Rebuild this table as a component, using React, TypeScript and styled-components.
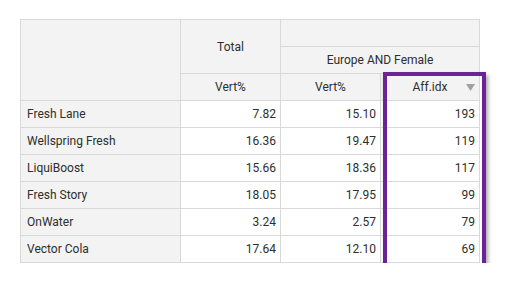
import React from "react";
import styled, { createGlobalStyle } from "styled-components";

const GlobalStyle = createGlobalStyle`
  html, body {
    margin: 0;
    padding: 0;
    background: #ffffff;
    font-family: Roboto, "Liberation Sans", sans-serif;
  }
`;

const Page = styled.div`
  padding: 19px 0 0 20px;
`;

const Frame = styled.div`
  position: relative;
  width: 459px;
`;

const Table = styled.table`
  border-collapse: collapse;
  table-layout: fixed;
  width: 459px;
  font-size: 12px;
  color: #2e2e2e;
`;

const Col = styled.col<{ $w: number }>`
  width: ${(p) => p.$w}px;
`;

const HeadCell = styled.th`
  height: 26px;
  padding: 0 4px;
  background: #f3f3f3;
  border: 1px solid #d9d9d9;
  font-weight: 400;
  text-align: center;
  vertical-align: middle;
  position: relative;
`;

const RowHead = styled.td`
  height: 26px;
  padding: 0 6px;
  background: #f3f3f3;
  border: 1px solid #d9d9d9;
  text-align: left;
  white-space: nowrap;
`;

const NumCell = styled.td`
  height: 26px;
  padding: 0 4px;
  background: #ffffff;
  border: 1px solid #d9d9d9;
  text-align: right;
`;

const SortArrow = styled.svg`
  position: absolute;
  right: 4px;
  top: 10px;
`;

const Highlight = styled.div`
  position: absolute;
  left: 363px;
  top: 53px;
  width: 103px;
  height: 195px;
  box-sizing: border-box;
  border: 4px solid #6a2496;
  box-shadow: 2px 3px 4px rgba(0, 0, 0, 0.35);
  pointer-events: none;
`;

const rows: [string, string, string, string][] = [
  ["Fresh Lane", "7.82", "15.10", "193"],
  ["Wellspring Fresh", "16.36", "19.47", "119"],
  ["LiquiBoost", "15.66", "18.36", "117"],
  ["Fresh Story", "18.05", "17.95", "99"],
  ["OnWater", "3.24", "2.57", "79"],
  ["Vector Cola", "17.64", "12.10", "69"],
];

const App = () => (
  <Page>
    <GlobalStyle />
    <Frame>
      <Table>
        <colgroup>
          <Col $w={160} />
          <Col $w={100} />
          <Col $w={100} />
          <Col $w={99} />
        </colgroup>
        <thead>
          <tr>
            <HeadCell rowSpan={3} />
            <HeadCell rowSpan={2}>Total</HeadCell>
            <HeadCell colSpan={2} />
          </tr>
          <tr>
            <HeadCell colSpan={2}>Europe AND Female</HeadCell>
          </tr>
          <tr>
            <HeadCell>Vert%</HeadCell>
            <HeadCell>Vert%</HeadCell>
            <HeadCell>
              Aff.idx
              <SortArrow width="9" height="7" viewBox="0 0 9 7">
                <path d="M0 0 L9 0 L4.5 7 Z" fill="#a0a0a0" />
              </SortArrow>
            </HeadCell>
          </tr>
        </thead>
        <tbody>
          {rows.map((r) => (
            <tr key={r[0]}>
              <RowHead>{r[0]}</RowHead>
              <NumCell>{r[1]}</NumCell>
              <NumCell>{r[2]}</NumCell>
              <NumCell>{r[3]}</NumCell>
            </tr>
          ))}
        </tbody>
      </Table>
      <Highlight />
    </Frame>
  </Page>
);

export default App;
